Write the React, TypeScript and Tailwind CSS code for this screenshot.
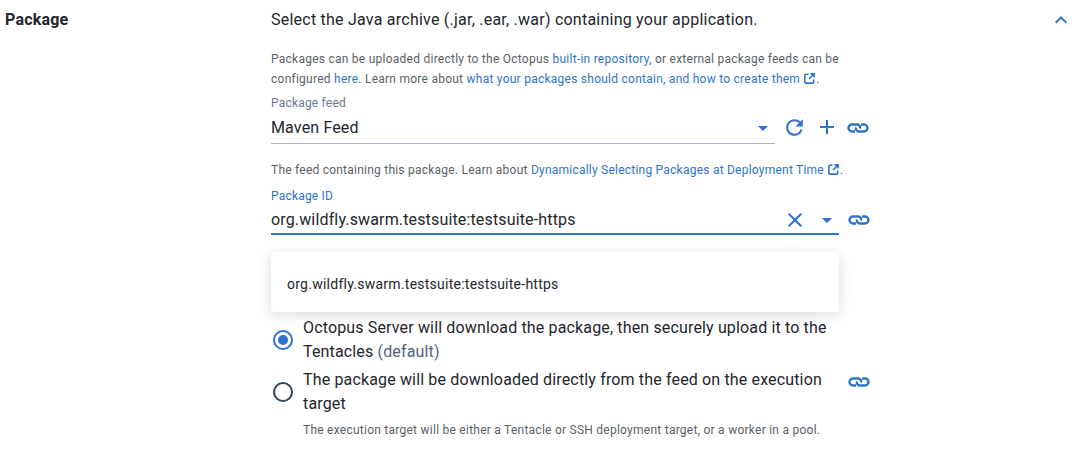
import React from "react";
import { MdAdd, MdClose, MdExpandLess, MdRefresh } from "react-icons/md";

const blue = "text-[#2e73c9]";

const Ext = () => (
  <svg viewBox="0 0 14 14" className="inline-block w-[13px] h-[13px] ml-[3px] align-[-2px]" fill="none" stroke="currentColor" strokeWidth="1.7">
    <path d="M6 2.5H3a1 1 0 0 0-1 1V11a1 1 0 0 0 1 1h7.5a1 1 0 0 0 1-1V8" />
    <path d="M8 2h4v4M12 2 6.5 7.5" />
  </svg>
);

const ChainLink = () => (
  <svg viewBox="0 0 22 10" className={`w-[22px] h-[10px] ${blue}`} fill="none" stroke="currentColor" strokeWidth="2.4">
    <path d="M13 5.5a3 3 0 0 0-3-4H5a3.5 3.5 0 0 0 0 7h3" />
    <path d="M9 4.5a3 3 0 0 0 3 4h5a3.5 3.5 0 0 0 0-7h-3" />
  </svg>
);

const A: React.FC<{ children: React.ReactNode }> = ({ children }) => (
  <span className={blue}>{children}</span>
);

const Caret = () => (
  <span className="w-0 h-0 border-x-[5px] border-x-transparent border-t-[5px] border-t-[#2e73c9]" />
);

const App: React.FC = () => {
  return (
    <div className="flex h-[454px] w-[1083px] overflow-hidden bg-white font-['Roboto',sans-serif] text-[#22262c]">
      <div className="w-[271px] pl-[5px] pt-[9px] text-[16px] leading-[22px] font-bold tracking-[0.2px]">
        Package
      </div>

      <div className="flex-1 pr-[10px] pt-[9px]">
        <div className="flex items-center justify-between h-[22px] text-[16px] tracking-[0.23px]">
          <span>Select the Java archive (.jar, .ear, .war) containing your application.</span>
          <MdExpandLess className={`text-[24px] ${blue}`} />
        </div>

        <p className="mt-[18px] text-[12px] leading-[20px] tracking-[0.25px] text-[#5b5f66]">
          Packages can be uploaded directly to the Octopus <A>built-in repository</A>, or external package feeds can be
          <br />
          configured <A>here</A>. Learn more about <A>what your packages should contain, and how to create them<Ext /></A>.
        </p>

        <div className="mt-[5px] flex">
          <div className="w-[504px] h-[50px] border-b border-[#b0b3c4]">
            <div className="text-[12px] leading-[18px] tracking-[0.2px] text-[#6b7a90]">Package feed</div>
            <div className="flex items-center justify-between pr-[7px] mt-[5px]">
              <span className="text-[16px] leading-[22px] tracking-[0.15px]">Maven Feed</span>
              <Caret />
            </div>
          </div>
          <div className={`flex items-center h-[24px] gap-[8px] ml-[8px] mt-[21px] ${blue}`}>
            <MdRefresh className="text-[25px] -mx-[1px]" />
            <span className="ml-[1px]"><MdAdd className="text-[24px]" /></span>
            <span className="mt-[2px]"><ChainLink /></span>
          </div>
        </div>

        <p className="mt-[16px] text-[12px] leading-[20px] tracking-[0.23px] text-[#5b5f66]">
          The feed containing this package. Learn about <A>Dynamically Selecting Packages at Deployment Time<Ext /></A>.
        </p>

        <div className="mt-[7px] flex">
          <div className="w-[568px] h-[48px] border-b-2 border-[#2e73c9]">
            <div className={`text-[12px] leading-[18px] tracking-[0.2px] ${blue}`}>Package ID</div>
            <div className="flex items-center justify-between pr-[7px] mt-[3px]">
              <span className="text-[16px] leading-[22px] tracking-[0.15px]">org.wildfly.swarm.testsuite:testsuite-https</span>
              <span className={`flex items-center gap-[15px] ${blue}`}>
                <MdClose className="text-[24px]" />
                <Caret />
              </span>
            </div>
          </div>
          <div className="ml-[9px] mt-[28px]">
            <ChainLink />
          </div>
        </div>

        <div className="mt-[17px] flex h-[60px] w-[568px] items-center rounded-[4px] bg-white pl-[16px] pt-[4px] text-[14px] tracking-[0.25px] shadow-[0_3px_14px_rgba(0,0,0,0.14)]">
          org.wildfly.swarm.testsuite:testsuite-https
        </div>

        <div className="mt-[4px] flex flex-col text-[16px] leading-[24px] tracking-[0.15px]">
          <div className="flex items-center">
            <span className="flex h-[20px] w-[20px] shrink-0 ml-[2px] items-center justify-center rounded-full border-2 border-[#2e73c9]">
              <span className="h-[10px] w-[10px] rounded-full bg-[#2e73c9]" />
            </span>
            <span className="ml-[10px] w-[530px]">
              Octopus Server will download the package, then securely upload it to the Tentacles{" "}
              <span className="text-[#56617a]">(default)</span>
            </span>
          </div>
          <div className="mt-[4px] flex items-center">
            <span className="h-[20px] w-[20px] shrink-0 ml-[2px] rounded-full border-2 border-[#2f4562]" />
            <span className="ml-[10px] w-[530px]">The package will be downloaded directly from the feed on the execution target</span>
            <span className="ml-[15px] self-start mt-[9px]">
              <ChainLink />
            </span>
          </div>
          <div className="mt-[4px] ml-[32px] text-[12px] leading-[20px] tracking-[0.25px] text-[#5b5f66]">
            The execution target will be either a Tentacle or SSH deployment target, or a worker in a pool.
          </div>
        </div>
      </div>
    </div>
  );
};

export default App;
